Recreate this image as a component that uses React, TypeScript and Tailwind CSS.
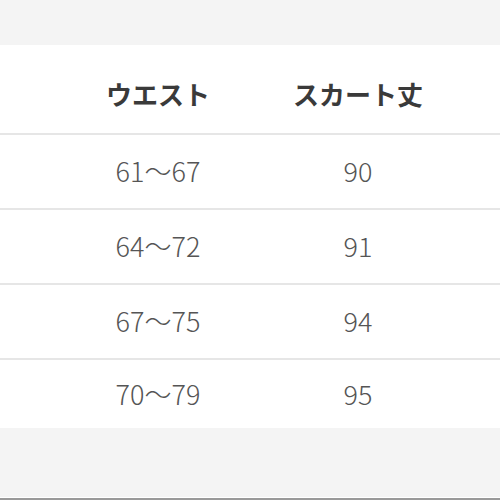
import React from "react";

const rows = [
  ["61〜67", "90"],
  ["64〜72", "91"],
  ["67〜75", "94"],
  ["70〜79", "95"],
];

export default function App() {
  return (
    <div
      className="w-[500px] h-[500px] bg-[#f4f4f4] flex flex-col overflow-hidden"
      style={{ fontFamily: '"Noto Sans CJK JP", "Noto Sans", sans-serif' }}
    >
      <div className="h-[45px] shrink-0" />
      <div className="bg-white">
        <div className="grid grid-cols-[58px_200px_200px_1fr] h-[90px] items-center pt-2 border-b-2 border-[#e6e6e6]">
          <div />
          <div className="text-center text-[26px] font-bold text-[#3a3a3a]">ウエスト</div>
          <div className="text-center text-[26px] font-bold text-[#3a3a3a]">スカート丈</div>
          <div />
        </div>
        {rows.map((r, i) => (
          <div
            key={i}
            className={`grid grid-cols-[58px_200px_200px_1fr] items-center ${
              i < rows.length - 1 ? "h-[75px] border-b-2 border-[#e6e6e6]" : "h-[68px]"
            }`}
          >
            <div />
            <div className="text-center text-[27px] font-light text-[#555]">{r[0]}</div>
            <div className="text-center text-[27px] font-light text-[#555]">{r[1]}</div>
            <div />
          </div>
        ))}
      </div>
      <div className="flex-1" />
      <div className="h-[1px] bg-white shrink-0" />
      <div className="h-[2px] bg-[#999] shrink-0" />
    </div>
  );
}
